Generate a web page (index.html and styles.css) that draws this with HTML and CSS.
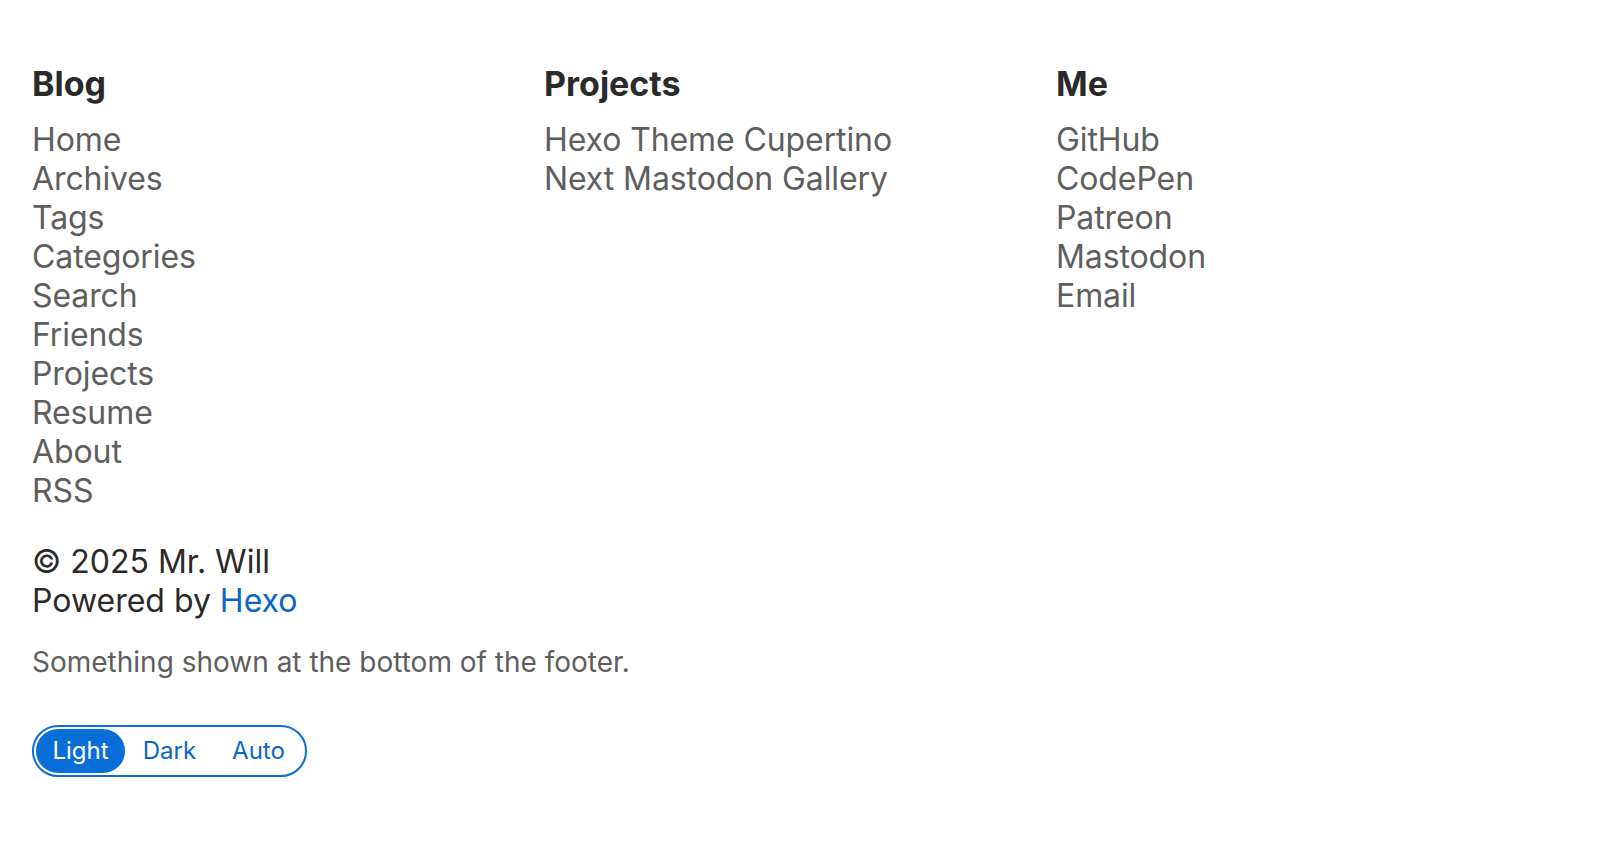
FILE: index.html
```html
<!DOCTYPE html>
<html>
<head>
<meta charset="utf-8">
<link rel="stylesheet" href="styles.css">
</head>
<body>
<footer class="footer">
  <div class="columns">
    <section class="col">
      <h2 class="col-title">Blog</h2>
      <ul class="links">
        <li><a href="#">Home</a></li>
        <li><a href="#">Archives</a></li>
        <li><a href="#">Tags</a></li>
        <li><a href="#">Categories</a></li>
        <li><a href="#">Search</a></li>
        <li><a href="#">Friends</a></li>
        <li><a href="#">Projects</a></li>
        <li><a href="#">Resume</a></li>
        <li><a href="#">About</a></li>
        <li><a href="#">RSS</a></li>
      </ul>
    </section>
    <section class="col">
      <h2 class="col-title">Projects</h2>
      <ul class="links">
        <li><a href="#">Hexo Theme Cupertino</a></li>
        <li><a href="#">Next Mastodon Gallery</a></li>
      </ul>
    </section>
    <section class="col">
      <h2 class="col-title">Me</h2>
      <ul class="links">
        <li><a href="#">GitHub</a></li>
        <li><a href="#">CodePen</a></li>
        <li><a href="#">Patreon</a></li>
        <li><a href="#">Mastodon</a></li>
        <li><a href="#">Email</a></li>
      </ul>
    </section>
  </div>
  <div class="copyright">
    <div>© 2025 Mr. Will</div>
    <div>Powered by <a class="blue" href="#">Hexo</a></div>
  </div>
  <p class="note">Something shown at the bottom of the footer.</p>
  <div class="toggle">
    <button class="opt active">Light</button>
    <button class="opt">Dark</button>
    <button class="opt">Auto</button>
  </div>
</footer>
</body>
</html>
```

FILE: styles.css
```css
html, body {
  margin: 0;
  padding: 0;
  background: #fff;
}
body {
  font-family: Inter, "Noto Sans", sans-serif;
  color: #2a2a2a;
}
.footer {
  padding: 62px 32px 40px 32px;
}
.columns {
  display: grid;
  grid-template-columns: repeat(3, 1fr);
}
.col-title {
  margin: 0 0 15px 0;
  font-size: 34px;
  line-height: 43px;
  font-weight: 700;
  color: #2a2a2a;
}
.links {
  list-style: none;
  margin: 0;
  padding: 0;
}
.links li {
  font-size: 32px;
  line-height: 39px;
  letter-spacing: -0.1px;
}
.links a {
  color: #5e5e5e;
  text-decoration: none;
}
.copyright {
  margin-top: 32px;
  font-size: 32px;
  line-height: 39px;
  color: #2a2a2a;
}
.blue {
  color: #0a66c8;
  text-decoration: none;
}
.note {
  margin: 24px 0 0 0;
  font-size: 28px;
  line-height: 36px;
  color: #5e5e5e;
}
.toggle {
  margin-top: 45px;
  display: inline-flex;
  align-items: center;
  border: 2px solid #0a6ed8;
  border-radius: 28px;
  padding: 2px;
}
.opt {
  font-family: Inter, "Noto Sans", sans-serif;
  font-size: 24px;
  line-height: 44px;
  height: 44px;
  width: 89px;
  padding: 0;
  border: none;
  background: transparent;
  color: #0a66c8;
  border-radius: 22px;
  text-align: center;
}
.opt.active {
  background: #0a6ed8;
  color: #fff;
}
```
